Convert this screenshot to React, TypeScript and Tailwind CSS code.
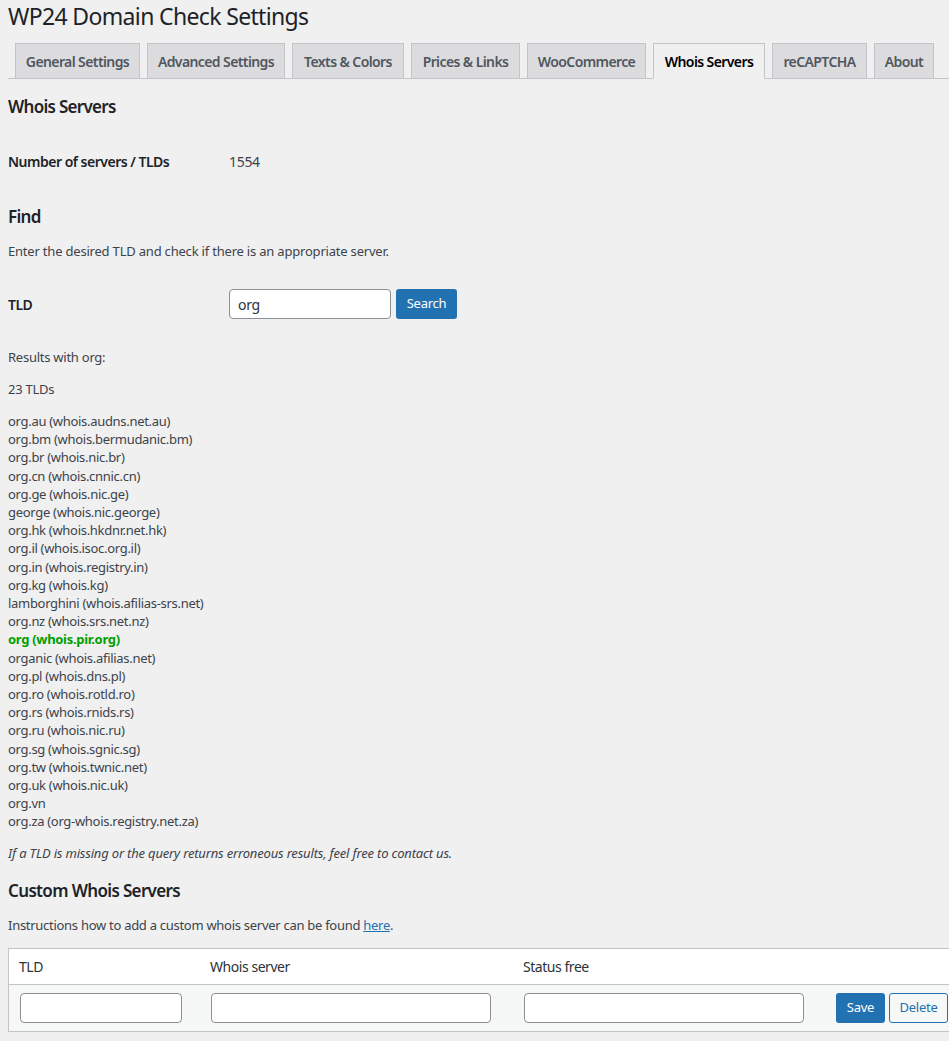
import React from "react";

const tabs: { label: string; w: string; active?: boolean }[] = [
  { label: "General Settings", w: "w-[125px]" },
  { label: "Advanced Settings", w: "w-[138px]" },
  { label: "Texts & Colors", w: "w-[112px]" },
  { label: "Prices & Links", w: "w-[109px]" },
  { label: "WooCommerce", w: "w-[119px]" },
  { label: "Whois Servers", w: "w-[112px]", active: true },
  { label: "reCAPTCHA", w: "w-[95px]" },
  { label: "About", w: "w-[60px]" },
];

const results: [string, string | null, boolean?][] = [
  ["org.au", "whois.audns.net.au"],
  ["org.bm", "whois.bermudanic.bm"],
  ["org.br", "whois.nic.br"],
  ["org.cn", "whois.cnnic.cn"],
  ["org.ge", "whois.nic.ge"],
  ["george", "whois.nic.george"],
  ["org.hk", "whois.hkdnr.net.hk"],
  ["org.il", "whois.isoc.org.il"],
  ["org.in", "whois.registry.in"],
  ["org.kg", "whois.kg"],
  ["lamborghini", "whois.afilias-srs.net"],
  ["org.nz", "whois.srs.net.nz"],
  ["org", "whois.pir.org", true],
  ["organic", "whois.afilias.net"],
  ["org.pl", "whois.dns.pl"],
  ["org.ro", "whois.rotld.ro"],
  ["org.rs", "whois.rnids.rs"],
  ["org.ru", "whois.nic.ru"],
  ["org.sg", "whois.sgnic.sg"],
  ["org.tw", "whois.twnic.net"],
  ["org.uk", "whois.nic.uk"],
  ["org.vn", null],
  ["org.za", "org-whois.registry.net.za"],
];

export default function App() {
  return (
    <div
      className="w-full min-h-[1041px] overflow-hidden bg-[#f0f0f1] text-[13px] tracking-[-0.25px] text-[#3c434a]"
      style={{ fontFamily: '"Noto Sans", "Open Sans", sans-serif' }}
    >
      <div className="pl-[8px] w-[960px]">
        <h1 className="h-[32px] leading-[32px] text-[23px] tracking-[-0.65px] font-normal text-[#1d2327]">
          WP24 Domain Check Settings
        </h1>

        <nav className="mt-[11px] flex items-end h-[36px] border-b border-[#c3c4c7] pl-[7px] gap-[7px]">
          {tabs.map((t) =>
            t.active ? (
              <div
                key={t.label}
                className={`${t.w} -mb-px h-[36px] flex items-start justify-center pt-[6px] border border-[#c3c4c7] border-b-[#f0f0f1] bg-[#f0f0f1] text-[14px] tracking-[-0.6px] leading-[24px] font-semibold text-black whitespace-nowrap`}
              >
                {t.label}
              </div>
            ) : (
              <div
                key={t.label}
                className={`${t.w} h-[35px] flex items-start justify-center pt-[6px] border border-b-0 border-[#c3c4c7] bg-[#dcdcde] text-[14px] tracking-[-0.6px] leading-[24px] font-semibold text-[#50575e] whitespace-nowrap`}
              >
                {t.label}
              </div>
            )
          )}
        </nav>

        <h2 className="mt-[17px] h-[22px] leading-[22px] text-[17px] tracking-[-0.7px] font-semibold text-[#1d2327]">
          Whois Servers
        </h2>

        <div className="mt-[33px] flex h-[20px] items-center">
          <div className="w-[221px] text-[14px] tracking-[-0.5px] font-semibold text-[#1d2327]">
            Number of servers / TLDs
          </div>
          <div className="text-[14px] tracking-[-0.3px]">1554</div>
        </div>

        <h2 className="mt-[35px] h-[22px] leading-[22px] text-[17px] tracking-[-0.7px] font-semibold text-[#1d2327]">
          Find
        </h2>

        <p className="mt-[14px] h-[18px] leading-[18px] tracking-[-0.2px]">
          Enter the desired TLD and check if there is an appropriate server.
        </p>

        <div className="mt-[29px] flex h-[30px] items-center">
          <div className="w-[221px] text-[14px] tracking-[-0.5px] font-semibold text-[#1d2327]">TLD</div>
          <div className="w-[162px] h-[30px] rounded-[4px] border border-[#8c8f94] bg-white px-[8px] flex items-center text-[14px] tracking-[-0.3px] text-[#2c3338]">
            org
          </div>
          <button className="ml-[5px] w-[61px] h-[30px] rounded-[3px] bg-[#2271b1] text-white text-[13px] flex items-center justify-center">
            Search
          </button>
        </div>

        <p className="mt-[29px] h-[18px] leading-[18px]">Results with org:</p>

        <p className="mt-[14px] h-[18px] leading-[18px]">23 TLDs</p>

        <div className="mt-[14px] leading-[18.2px] tracking-[-0.3px]">
          {results.map(([tld, srv, hl]) =>
            hl ? (
              <div key={tld} className="font-bold text-[#00a000]">
                {tld} ({srv})
              </div>
            ) : (
              <div key={tld}>
                {tld}
                {srv ? ` (${srv})` : ""}
              </div>
            )
          )}
        </div>

        <p className="mt-[13px] h-[18px] leading-[18px] italic tracking-[-0.18px]">
          If a TLD is missing or the query returns erroneous results, feel free to contact us.
        </p>

        <h2 className="mt-[18px] h-[22px] leading-[22px] text-[17px] tracking-[-0.65px] font-semibold text-[#1d2327]">
          Custom Whois Servers
        </h2>

        <p className="mt-[14px] h-[18px] leading-[18px] tracking-[-0.28px]">
          Instructions how to add a custom whois server can be found{" "}
          <a className="text-[#2271b1] underline" href="#">
            here
          </a>
          .
        </p>

        <div className="mt-[14px] w-[952px] border border-[#c3c4c7] bg-white">
          <div className="flex h-[36px] items-center border-b border-[#c3c4c7] text-[14px] tracking-[-0.45px] text-[#2c3338]">
            <div className="w-[191px] pl-[10px]">TLD</div>
            <div className="w-[313px] pl-[10px]">Whois server</div>
            <div className="pl-[10px]">Status free</div>
          </div>
          <div className="flex h-[46px] items-center bg-[#f6f7f7]">
            <div className="w-[191px] pl-[11px]">
              <div className="w-[162px] h-[30px] rounded-[4px] border border-[#8c8f94] bg-white" />
            </div>
            <div className="w-[313px] pl-[11px]">
              <div className="w-[280px] h-[30px] rounded-[4px] border border-[#8c8f94] bg-white" />
            </div>
            <div className="w-[323px] pl-[11px]">
              <div className="w-[280px] h-[30px] rounded-[4px] border border-[#8c8f94] bg-white" />
            </div>
            <button className="w-[49px] h-[30px] rounded-[3px] bg-[#2271b1] text-white text-[13px] flex items-center justify-center">
              Save
            </button>
            <button className="ml-[4px] w-[59px] h-[30px] rounded-[3px] border border-[#2271b1] bg-[#f6f7f7] text-[#2271b1] text-[13px] flex items-center justify-center">
              Delete
            </button>
          </div>
        </div>
      </div>
    </div>
  );
}
